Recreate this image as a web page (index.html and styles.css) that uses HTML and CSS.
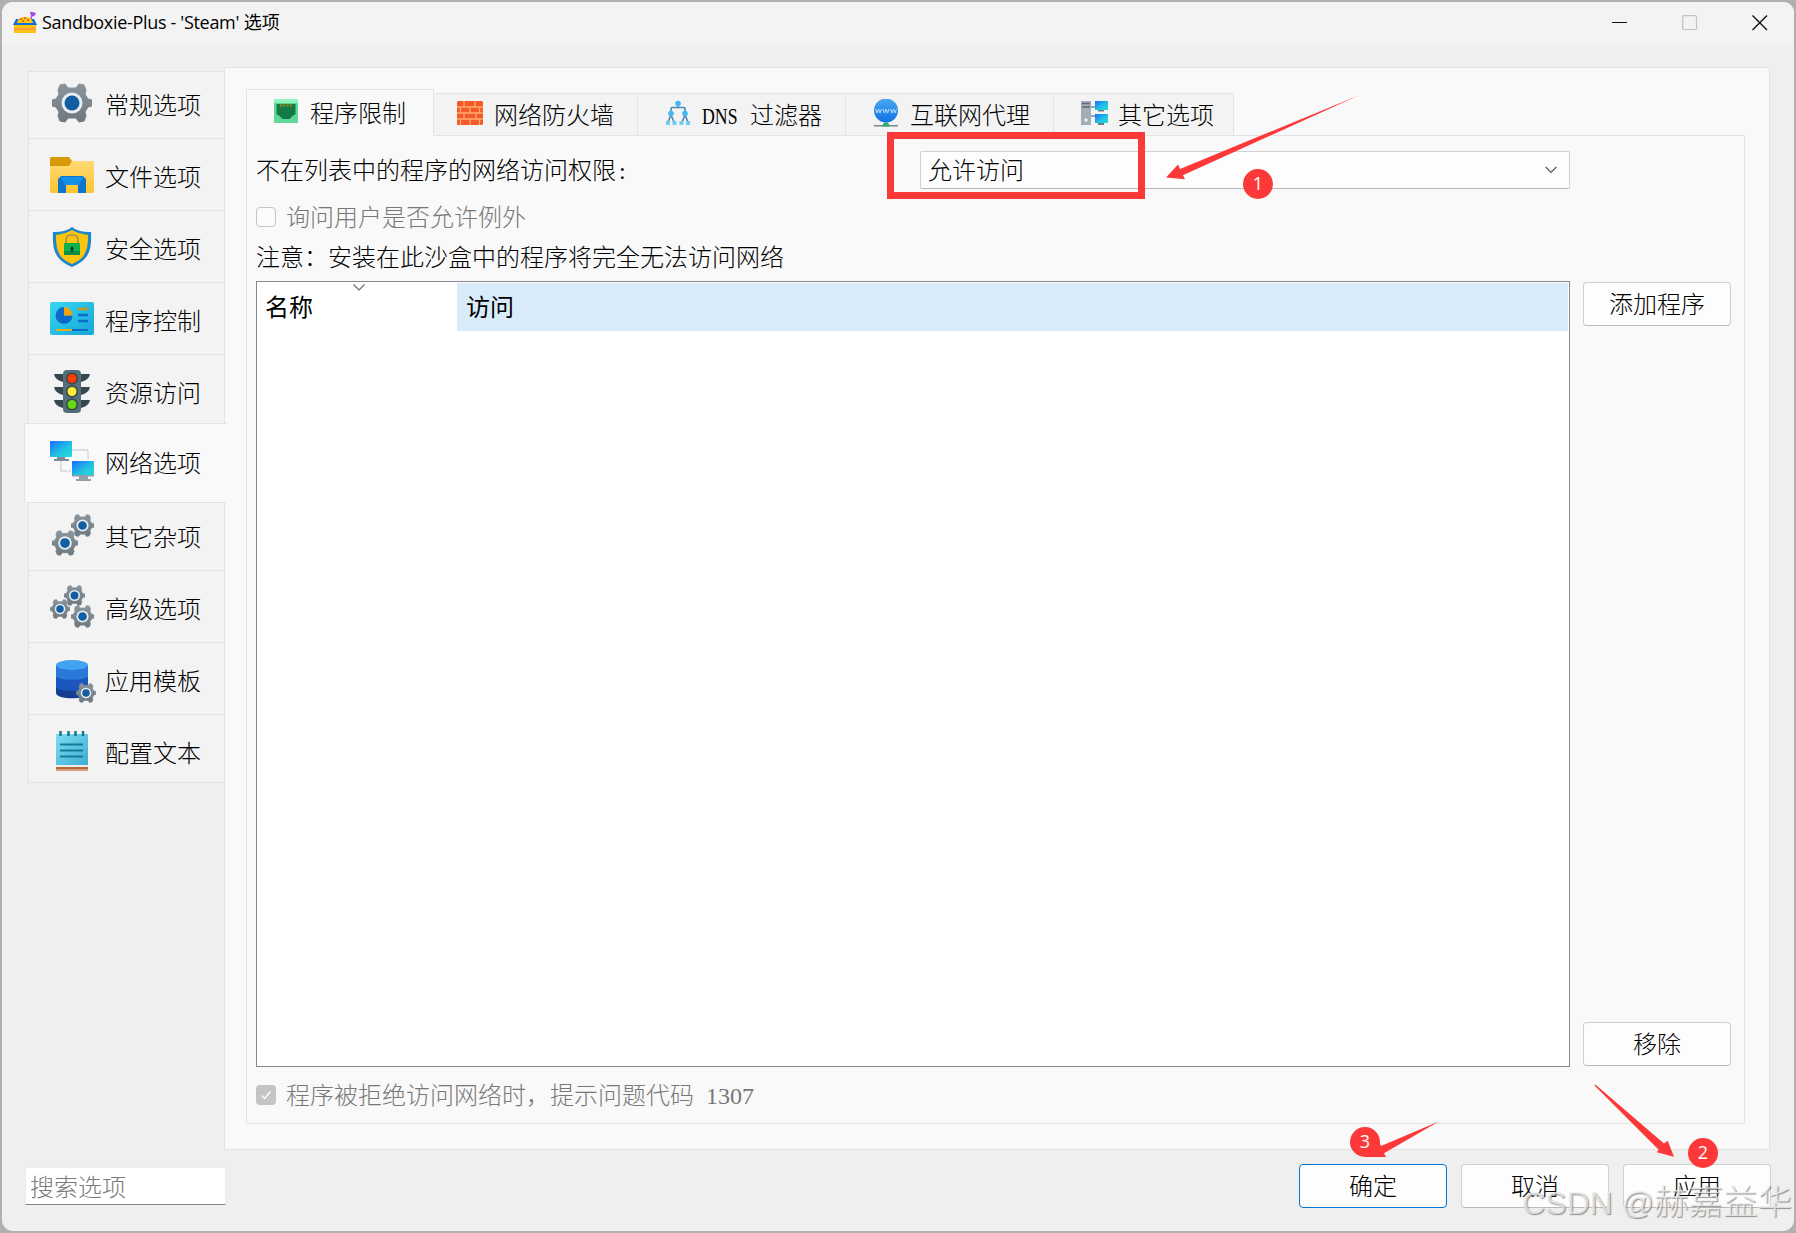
FILE: index.html
```html
<!DOCTYPE html>
<html lang="zh-CN">
<head>
  <meta charset="UTF-8" />
  <meta name="viewport" content="width=device-width, initial-scale=1.0" />
  <title>Sandboxie-Plus - 'Steam' 选项</title>
  <link rel="stylesheet" href="styles.css">
</head>
<body>
  <!-- shared shapes -->
  <svg class="defs" width="0" height="0">
    <defs>
      <linearGradient id="gearFill" x1="0" y1="0" x2="0" y2="1">
        <stop offset="0" stop-color="#8a949c"/><stop offset="1" stop-color="#6d7880"/>
      </linearGradient>
      <linearGradient id="screenFill" x1="0" y1="0" x2="1" y2="1">
        <stop offset="0" stop-color="#1a6dff"/><stop offset=".6" stop-color="#22c5e0"/><stop offset="1" stop-color="#22dcd4"/>
      </linearGradient>
      <linearGradient id="folderFill" x1="0" y1="0" x2="0" y2="1">
        <stop offset="0" stop-color="#ffd976"/><stop offset="1" stop-color="#fdc52f"/>
      </linearGradient>
      <linearGradient id="cardFill" x1="0" y1="0" x2="1" y2="1">
        <stop offset="0" stop-color="#36d8ef"/><stop offset="1" stop-color="#18a3d8"/>
      </linearGradient>
      <linearGradient id="noteFill" x1="0" y1="0" x2="1" y2="1">
        <stop offset="0" stop-color="#7fdcf0"/><stop offset="1" stop-color="#3dacd4"/>
      </linearGradient>
      <linearGradient id="globeFill" x1="0" y1="0" x2="0" y2="1">
        <stop offset="0" stop-color="#4aa8f0"/><stop offset="1" stop-color="#0f73e6"/>
      </linearGradient>
      <symbol id="gear" viewBox="0 0 40 40">
        <path fill="url(#gearFill)" stroke="url(#gearFill)" stroke-width="1" stroke-linejoin="round" d="M8 2l5-1 3 4h8l3-4 5 1 2 5-1 4 3 5 4 1v6l-4 1-3 5 1 4-2 5-5 1-3-4h-8l-3 4-5-1-2-5 1-4-3-5-4-1v-6l4-1 3-5-1-4z"/>
        <circle cx="20" cy="20" r="10.5" fill="#e9edf0"/>
        <circle cx="20" cy="20" r="7.5" fill="#115ea3"/>
      </symbol>
    </defs>
  </svg>

  <div class="window">
    <header class="titlebar">
      <svg class="app-icon" viewBox="0 0 24 24">
        <path d="M3 8h18l3 6H0z" fill="#0a6fe0"/>
        <path d="M4 12c1-5 4-6 8-6s7 1 8 6z" fill="#ffc40c"/>
        <path d="M7 8h2M11 7h2M9 10h2M14 9h2" stroke="#e8501a" stroke-width="1.3"/>
        <path d="M18 8l1-5" stroke="#a348e0" stroke-width="1.3"/>
        <path d="M17 .5l6 1.500-2 3.500-3-.5z" fill="#a348e0"/>
        <path d="M1 14h22v8H1z" fill="#ffc114"/>
        <path d="M1 17h22v2H1z" fill="#ff9c3c"/>
      </svg>
      <h1><span class="name">Sandboxie-Plus - 'Steam'</span> 选项</h1>
      <div class="win-buttons">
        <svg viewBox="0 0 16 16"><path d="M0 7.500h15" stroke="#111" stroke-width="1.1"/></svg>
        <svg viewBox="0 0 16 16"><rect x=".7" y=".7" width="13.8" height="13.8" rx="1" fill="none" stroke="#c3c3c3" stroke-width="1.2"/></svg>
        <svg viewBox="0 0 16 16"><path d="M.5.5l14.500 14.500M15 .5L.5 15" stroke="#111" stroke-width="1.4"/></svg>
      </div>
    </header>

    <main class="body">
      <nav class="side">
        <div class="side-item first">
          <svg viewBox="0 0 44 44"><use href="#gear" x="2" y="2" width="40" height="40"/></svg>
          <span>常规选项</span>
        </div>
        <div class="side-item">
          <svg viewBox="0 0 44 44">
            <path d="M0 8h44v30q0 2-2 2H2q-2 0-2-2z" fill="url(#folderFill)"/>
            <path d="M1 4h18l3 4-3 5H0V5z" fill="#d69a08"/>
            <path d="M8 40V26l3-3h22l3 3v14h-8v-8H16v8z" fill="#0a74cf"/>
            <path d="M10 24h24l-6 8H16z" fill="#1492e6"/>
          </svg>
          <span>文件选项</span>
        </div>
        <div class="side-item">
          <svg viewBox="0 0 44 44">
            <path d="M22 2c5 4 11 5 19 5 1 18-2 28-19 35C5 35 2 25 3 7c8 0 14-1 19-5z" fill="#1f86c9"/>
            <path d="M22 5c5 3 10 4 16 5 0 15-2 23-16 29C8 33 6 25 6 10c6-1 11-2 16-5z" fill="#ffc40d"/>
            <path d="M16 18v-3c0-7 12-7 12 0v3" fill="none" stroke="#b09a45" stroke-width="2"/>
            <rect x="14" y="18" width="16" height="12" rx="1" fill="#0db04b"/>
            <path d="M14 26h16v4H14z" fill="#0a8f45"/>
            <path d="M22 21.500a2 2 0 011 3.500v2h-2v-2a2 2 0 011-3.500z" fill="#083e20"/>
          </svg>
          <span>安全选项</span>
        </div>
        <div class="side-item">
          <svg viewBox="0 0 44 44">
            <rect y="5" width="44" height="33" rx="2" fill="url(#cardFill)"/>
            <path d="M14 10a8.500 8.500 0 108.500 8.500H14z" fill="#0a6bc9"/>
            <path d="M14 10v8.500h8.500A8.500 8.500 0 0014 10z" fill="#f6a20b"/>
            <path d="M28 12h10" stroke="#c8971c" stroke-width="2.500"/>
            <path d="M28 18h10M28 24h10" stroke="#0a6bc9" stroke-width="2.500"/>
            <path d="M22 33h16" stroke="#0a6bc9" stroke-width="2"/>
            <path d="M6 33h16" stroke="#e0b020" stroke-width="2"/>
          </svg>
          <span>程序控制</span>
        </div>
        <div class="side-item before-active">
          <svg viewBox="0 0 44 44">
            <path d="M4 5h36q-1 6-9 8H13Q5 11 4 5zM4 18h36q-1 6-9 8H13Q5 24 4 18zM4 31h36q-1 6-9 8H13Q5 37 4 31z" fill="#37474f"/>
            <rect x="13" y="1" width="18" height="43" rx="4" fill="#546e7a"/>
            <circle cx="22" cy="9.500" r="6" fill="#3b4347"/><circle cx="22" cy="22.500" r="6" fill="#3b4347"/><circle cx="22" cy="35.500" r="6" fill="#3b4347"/>
            <circle cx="22" cy="9.500" r="4.500" fill="#ff3d00"/><circle cx="22" cy="22.500" r="4.500" fill="#ffeb3b"/><circle cx="22" cy="35.500" r="4.500" fill="#64dd17"/>
          </svg>
          <span>资源访问</span>
        </div>
        <div class="side-item active">
          <svg viewBox="0 0 44 44">
            <path d="M22 11h16v9M11 22v10h11" fill="none" stroke="#dce0e4" stroke-width="2" stroke-dasharray="16 1 3 1"/>
            <rect y="2" width="22" height="16" rx="1" fill="url(#screenFill)"/>
            <path d="M7 18h8v2h4v2H4v-2h3z" fill="#7e8b95"/>
            <rect x="22" y="22" width="22" height="15" rx="1" fill="url(#screenFill)"/>
            <path d="M22 36h22v1.500H22zM29 37h9v3h3v2H26v-2h3z" fill="#94a0a9"/>
          </svg>
          <span>网络选项</span>
        </div>
        <div class="side-item after-active">
          <svg viewBox="0 0 44 44">
            <use href="#gear" x="21" y="1" width="23" height="23"/>
            <use href="#gear" x="2" y="17" width="26" height="26"/>
          </svg>
          <span>其它杂项</span>
        </div>
        <div class="side-item">
          <svg viewBox="0 0 44 44">
            <use href="#gear" x="14" y="0" width="21" height="21"/>
            <use href="#gear" x="0" y="14" width="20" height="20"/>
            <use href="#gear" x="21" y="20" width="23" height="23"/>
          </svg>
          <span>高级选项</span>
        </div>
        <div class="side-item">
          <svg viewBox="0 -1 44 44" overflow="visible">
            <path d="M6 7v28c0 7 32 7 32 0V7z" fill="#123f92"/>
            <path d="M6 7v22c0 5 32 5 32 0V7z" fill="#1a56bd"/>
            <path d="M6 7v11c0 5 32 5 32 0V7z" fill="#2a78d8"/>
            <ellipse cx="22" cy="7" rx="16" ry="5" fill="#42a4f0"/>
            <use href="#gear" x="26" y="25" width="20" height="20"/>
          </svg>
          <span>应用模板</span>
        </div>
        <div class="side-item last">
          <svg viewBox="0 0 44 44">
            <path d="M6 35h32v7H6z" fill="#b5673c"/>
            <path d="M6 34h32v4H6z" fill="#f1ece8"/>
            <path d="M6 40h32v2H6z" fill="#d89d78"/>
            <path d="M6 5h32v31H6z" fill="url(#noteFill)"/>
            <path d="M10.500 2v5M18.500 2v5M25.500 2v5M33 2v5" stroke="#10788f" stroke-width="2.500"/>
            <path d="M10 15.500h23M10 21.500h23M10 27.500h23" stroke="#107c9c" stroke-width="2"/>
          </svg>
          <span>配置文本</span>
        </div>
      </nav>

      <section class="panel">
        <div class="tabs">
          <div class="tab active">
            <svg viewBox="0 0 28 28">
              <rect x="2" y="2" width="24" height="24" fill="#5fd897"/>
              <path d="M2 2h24v4H2z" fill="#8ff5bd"/>
              <path d="M4.500 7h19v10l-3 2-3 3h-7l-3-3-3-2z" fill="#127a45"/>
              <path d="M8 8.500h12" stroke="#8a8a1c" stroke-width="2.500" stroke-dasharray="2 1.300"/>
            </svg>
            <span>程序限制</span>
          </div>
          <div class="tab">
            <svg viewBox="0 0 28 28">
              <rect x="1" y="2" width="26" height="24" rx="1.500" fill="#f4592b"/>
              <path d="M1 8h26M1 14h26M1 20h26M8 2v6M19 2v6M14 8v6M4.500 8v6M23.500 8v6M8 14v6M20 14v6M4.500 20v6M14 20v6M23.500 20v6" stroke="#ffab6b" stroke-width="1.300" fill="none"/>
            </svg>
            <span>网络防火墙</span>
          </div>
          <div class="tab">
            <svg viewBox="0 0 28 28">
              <path d="M14 5v3.500M7 13V9.500q0-1 1-1h12q1 0 1 1V13M7 16l-3 7M7 16l3 7M21 16l-3 7M21 16l3 7" stroke="#4c86b8" stroke-width="1.600" fill="none"/>
              <g fill="#42b8f2"><circle cx="14" cy="4.500" r="2.800"/><circle cx="7" cy="14.500" r="2.800"/><circle cx="21" cy="14.500" r="2.800"/>
              <path d="M2 22h4v4H2zM8.500 22h4v4h-4zM15.500 22h4v4h-4zM22 22h4v4h-4z" fill="#71ccf5"/></g>
            </svg>
            <span><b class="latin narrow">DNS</b>过滤器</span>
          </div>
          <div class="tab">
            <svg viewBox="0 0 28 28">
              <path d="M2 26h24v1.600H2z" fill="#7b8891"/><path d="M10 27.600l2-4h4l2 4z" fill="#2faa6a"/>
              <circle cx="14" cy="11.500" r="12" fill="url(#globeFill)"/>
              <path d="M3.500 10l1.500 4 1.500-4 1.500 4L9.500 10M11 10l1.500 4 1.500-4 1.500 4L17 10M18.500 10l1.500 4 1.500-4 1.500 4 1.500-4" stroke="#b8dcfa" stroke-width="1" fill="none"/>
            </svg>
            <span>互联网代理</span>
          </div>
          <div class="tab">
            <svg viewBox="0 0 28 28">
              <path d="M11 8h5M11 17h5" stroke="#7c8b97" stroke-width="1.500"/>
              <rect x="1" y="2" width="10" height="24" fill="#a3adb8"/>
              <path d="M2 4.500h8M2 8h8" stroke="#5f6b76" stroke-width="1.500"/><circle cx="6" cy="21" r="1.700" fill="#eef1f3"/>
              <rect x="15" y="2" width="13" height="9" fill="url(#screenFill)"/><path d="M18 11h6v1.500h-6z" fill="#6e7c88"/>
              <rect x="15" y="15" width="13" height="9" fill="url(#screenFill)"/><path d="M18 24h6v2h-6z" fill="#6e7c88"/>
            </svg>
            <span>其它选项</span>
          </div>
        </div>

        <div class="page">
          <div class="row-access">
            <label>不在列表中的程序的网络访问权限<b class="colon">:</b></label>
            <div class="combo">
              <span>允许访问</span>
              <svg viewBox="0 0 12 8"><path d="M.7 1l5.300 5.500L11.300 1" fill="none" stroke="#555" stroke-width="1.200"/></svg>
            </div>
          </div>
          <div class="check"><i class="box"></i><span>询问用户是否允许例外</span></div>
          <p class="note">注意：安装在此沙盒中的程序将完全无法访问网络</p>
          <div class="list-row">
            <div class="list">
              <div class="list-head">
                <div class="col-name">名称
                  <svg viewBox="0 0 12 7"><path d="M.5.500L6 6 11.500.500" fill="none" stroke="#666" stroke-width="1.100"/></svg>
                </div>
                <div class="col-access">访问</div>
              </div>
            </div>
            <div class="list-actions">
              <button>添加程序</button>
              <button>移除</button>
            </div>
          </div>
          <div class="check bottom">
            <i class="box checked"><svg viewBox="0 0 20 20"><path d="M5.500 10.500l3 3 6-7" fill="none" stroke="#fff" stroke-width="1.300"/></svg></i>
            <span>程序被拒绝访问网络时，提示问题代码<b class="latin code">1307</b></span>
          </div>
        </div>
      </section>
    </main>

    <footer class="footer">
      <input class="search" type="text" placeholder="搜索选项">
      <div class="dialog-buttons">
        <button class="primary">确定</button>
        <button>取消</button>
        <button>应用</button>
      </div>
    </footer>
  </div>

  <!-- step marks -->
  <svg class="marks" viewBox="0 0 1796 1233">
    <rect x="890.500" y="135.500" width="251" height="60" fill="none" stroke="#fc3838" stroke-width="7"/>
    <g fill="#fc3838">
      <path d="M1166 177.500l12-13 2 4.500 178.500-73.500L1183 175.300l2 3.900z"/>
      <path d="M1594.500 1085.500l.8-1 68.700 59 3.700-2.800 6.300 16-17.300-4.500 2-2.500z"/>
      <path d="M1365 1157l14-15 2 4 58.300-24.700-55.300 32 2 3.700z"/>
      <circle cx="1258" cy="184" r="15"/>
      <circle cx="1703" cy="1153" r="15"/>
      <circle cx="1365" cy="1142" r="15"/>
    </g>
    <g class="mark-num">
      <text x="1258" y="190">1</text>
      <text x="1703" y="1159">2</text>
      <text x="1365" y="1148">3</text>
    </g>
  </svg>
  <div class="watermark"><span>CSDN @</span>赫嘉益华</div>
</body>
</html>
```
FILE: styles.css
```css
* {
  box-sizing: border-box;
  margin: 0;
  padding: 0;
}
body {
  position: relative;
  width: 1796px;
  height: 1233px;
  padding: 2px;
  overflow: hidden;
  background: #b0b0b0;
  color: #000;
  font-family: "Noto Sans CJK SC", sans-serif;
  font-size: 24px;
  font-weight: 300;
  line-height: 30px;
}
.defs {
  position: absolute;
}
.window {
  display: flex;
  flex-direction: column;
  width: 1792px;
  height: 1229px;
  background: #efefef;
  border-radius: 11px;
  overflow: hidden;
}

/* title bar */
.titlebar {
  display: flex;
  align-items: center;
  height: 43px;
  flex: none;
  padding: 0 26px 2px 11px;
  background: #f3f3f3;
}
.app-icon {
  width: 24px;
  height: 24px;
  margin-right: 5px;
}
.titlebar h1 {
  font-family: "Open Sans", "Noto Sans CJK SC", sans-serif;
  font-size: 18px;
  font-weight: 400;
  line-height: 28px;
  margin-top: -2px;
  white-space: nowrap;
}
.titlebar .name {
  letter-spacing: -0.32px;
}
.win-buttons {
  display: flex;
  gap: 54px;
  margin-left: auto;
}
.win-buttons svg {
  width: 16px;
  height: 16px;
}

.body {
  display: flex;
  padding: 22px 24px 0 22px;
  height: 1105px;
  flex: none;
}

/* left tabs */
.side {
  position: relative;
  z-index: 1;
  width: 201px;
  padding: 4px 0 0 4px;
  margin-right: -1px;
}
.side-item {
  display: flex;
  align-items: center;
  gap: 11px;
  height: 72px;
  padding: 4px 0 0 21px;
  background: #f3f3f3;
  border: 1px solid #e3e3e3;
  border-bottom: none;
}
.side-item svg {
  width: 44px;
  height: 44px;
  margin-top: -4px;
}
.side-item span,
.tab span,
.combo span,
.row-access label,
.check span {
  margin-top: -2px;
}
.side-item.first {
  height: 67px;
  padding-top: 0;
}
.side-item.before-active {
  height: 69px;
  padding-top: 8px;
}
.side-item.active {
  height: 79px;
  margin: 0 -2px 0 -4px;
  padding: 0 0 0 25px;
  background: #f9f9f9;
  border-right: none;
}
.side-item.after-active {
  height: 68px;
  padding-top: 0;
}
.side-item.last {
  height: 69px;
  padding-top: 9px;
  border-bottom: 1px solid #e3e3e3;
}

/* panel */
.panel {
  flex: 1;
  height: 1083px;
  padding: 21px 24px 0 21px;
  background: #f9f9f9;
  border: 1px solid #e3e3e3;
}
.tabs {
  position: relative;
  z-index: 1;
  display: flex;
  align-items: flex-end;
  height: 47px;
  margin-bottom: -1px;
}
.tab {
  display: flex;
  align-items: center;
  gap: 10px;
  width: 208px;
  height: 43px;
  padding-left: 26px;
  background: #f3f3f3;
  border: 1px solid #e3e3e3;
  border-left: none;
  white-space: nowrap;
}
.tab svg {
  width: 28px;
  height: 28px;
  margin-top: -3px;
}
.tab.active {
  width: 188px;
  height: 47px;
  padding: 0 0 2px 25px;
  background: #f9f9f9;
  border-left: 1px solid #e3e3e3;
  border-bottom: none;
}
.tab.active span {
  margin-top: 0;
}
.tab:nth-child(2) {
  width: 204px;
  padding-left: 22px;
}
.tab:nth-child(5) {
  width: 180px;
  padding-left: 26px;
}
.latin {
  display: inline-block;
  font-family: "Liberation Serif", serif;
  font-weight: 400;
  line-height: 1;
}
.latin.narrow {
  width: 48px;
  transform: scaleX(0.74);
  transform-origin: left;
}
.latin.code {
  margin-left: 12px;
}
.colon {
  margin-left: 3px;
  font-family: "Liberation Serif", serif;
  line-height: 1;
}
.page {
  height: 989px;
  padding: 15px 12px 0 9px;
  border: 1px solid #e3e3e3;
}
.row-access {
  display: flex;
  align-items: center;
  width: 1314px;
  height: 38px;
}
.combo {
  display: flex;
  align-items: center;
  justify-content: space-between;
  width: 650px;
  height: 38px;
  margin-left: auto;
  padding: 0 12px 0 7px;
  background: #fdfdfd;
  border: 1px solid #d0d0d0;
  border-bottom-color: #b8b8b8;
  border-radius: 2px;
}
.combo svg {
  width: 12px;
  height: 8px;
}
.check {
  display: flex;
  align-items: center;
  gap: 10px;
  height: 20px;
  margin-top: 18px;
  color: #787878;
}
.box {
  width: 20px;
  height: 20px;
  border: 1px solid #c5c5c5;
  border-radius: 4px;
  background: #fbfbfb;
}
.box.checked {
  border: none;
  background: #c4c4c4;
}
.box svg {
  display: block;
}
.note {
  margin-top: 14px;
}
.list-row {
  display: flex;
  justify-content: space-between;
  height: 786px;
  margin-top: 10px;
}
.list {
  width: 1314px;
  padding: 1px;
  background: #fff;
  border: 1px solid #828790;
}
.list-head {
  display: flex;
  height: 48px;
  line-height: 46px;
  font-weight: 400;
}
.col-name {
  position: relative;
  width: 199px;
  padding-left: 7px;
}
.col-name svg {
  position: absolute;
  top: 1px;
  left: 95px;
  width: 12px;
  height: 7px;
}
.col-access {
  flex: 1;
  padding-left: 9px;
  background: #d9ebf9;
}
.list-actions {
  display: flex;
  flex-direction: column;
  justify-content: space-between;
  margin-right: 1px;
  padding: 1px 0;
}
button {
  width: 148px;
  height: 44px;
  padding-bottom: 2px;
  background: #fdfdfd;
  border: 1px solid #d0d0d0;
  border-bottom-color: #b9b9b9;
  border-radius: 4px;
  color: #000;
  font: inherit;
}
.check.bottom span {
  margin-top: -2px;
}

/* footer */
.footer {
  display: flex;
  justify-content: space-between;
  padding: 14px 23px 0 23px;
}
.search {
  width: 201px;
  height: 38px;
  margin-top: 3px;
  padding: 0 0 1px 4px;
  background: #fff;
  border: 1px solid #ececec;
  border-bottom: 1px solid #868686;
  font: inherit;
}
.search::placeholder {
  color: #7a7a7a;
}
.dialog-buttons {
  display: flex;
  gap: 14px;
}
button.primary {
  border-color: #0078d4;
}

/* overlays */
.marks {
  position: absolute;
  z-index: 2;
  top: 0;
  left: 0;
  width: 1796px;
  height: 1233px;
}
.mark-num {
  fill: #fff;
  font-family: "Open Sans", sans-serif;
  font-size: 18px;
  font-weight: 400;
  text-anchor: middle;
}
.watermark {
  position: absolute;
  z-index: 2;
  right: 4px;
  bottom: 8px;
  font-size: 34.500px;
  line-height: 44px;
  color: rgba(240, 240, 240, 0.75);
  text-shadow: 1px 1px 1px rgba(110, 110, 110, 0.75);
  white-space: nowrap;
}
.watermark span {
  font-family: "Liberation Sans", sans-serif;
  font-size: 32px;
}
```
